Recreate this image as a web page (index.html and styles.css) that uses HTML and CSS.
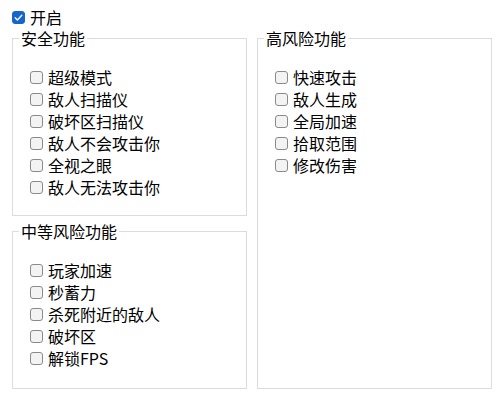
FILE: index.html
```html
<!DOCTYPE html>
<html lang="zh-CN">
<head>
<meta charset="utf-8">
<title>功能设置</title>
<link rel="stylesheet" href="styles.css">
</head>
<body>
<div class="app">
  <label class="opt top-opt">
    <span class="box checked"><svg viewBox="0 0 13 13" width="13" height="13"><path d="M3.2 6.8 L5.4 9 L9.8 4.3" fill="none" stroke="#fff" stroke-width="1.3" stroke-linecap="round" stroke-linejoin="round"/></svg></span>
    <span class="txt">开启</span>
  </label>
  <div class="cols">
    <div class="left-col">
      <fieldset class="group g-safe">
        <legend>安全功能</legend>
        <div class="list">
          <label class="opt"><span class="box"></span><span class="txt">超级模式</span></label>
          <label class="opt"><span class="box"></span><span class="txt">敌人扫描仪</span></label>
          <label class="opt"><span class="box"></span><span class="txt">破坏区扫描仪</span></label>
          <label class="opt"><span class="box"></span><span class="txt">敌人不会攻击你</span></label>
          <label class="opt"><span class="box"></span><span class="txt">全视之眼</span></label>
          <label class="opt"><span class="box"></span><span class="txt">敌人无法攻击你</span></label>
        </div>
      </fieldset>
      <fieldset class="group g-mid">
        <legend>中等风险功能</legend>
        <div class="list">
          <label class="opt"><span class="box"></span><span class="txt">玩家加速</span></label>
          <label class="opt"><span class="box"></span><span class="txt">秒蓄力</span></label>
          <label class="opt"><span class="box"></span><span class="txt">杀死附近的敌人</span></label>
          <label class="opt"><span class="box"></span><span class="txt">破坏区</span></label>
          <label class="opt"><span class="box"></span><span class="txt">解锁FPS</span></label>
        </div>
      </fieldset>
    </div>
    <fieldset class="group g-high">
      <legend>高风险功能</legend>
      <div class="list">
        <label class="opt"><span class="box"></span><span class="txt">快速攻击</span></label>
        <label class="opt"><span class="box"></span><span class="txt">敌人生成</span></label>
        <label class="opt"><span class="box"></span><span class="txt">全局加速</span></label>
        <label class="opt"><span class="box"></span><span class="txt">拾取范围</span></label>
        <label class="opt"><span class="box"></span><span class="txt">修改伤害</span></label>
      </div>
    </fieldset>
  </div>
</div>
</body>
</html>
```

FILE: styles.css
```css
html, body {
  margin: 0;
  padding: 0;
  background: #ffffff;
}

body {
  font-family: "Noto Sans CJK SC", "Noto Sans", sans-serif;
  font-size: 16px;
  color: #000000;
}

.app {
  width: 500px;
  height: 399px;
  box-sizing: border-box;
  padding: 7px 8px 0 12px;
}

.opt {
  display: flex;
  align-items: center;
  height: 22px;
  line-height: 22px;
}

.top-opt {
  height: 20px;
  line-height: 20px;
}

.box {
  width: 13px;
  height: 13px;
  box-sizing: border-box;
  border: 1px solid #8a8a8a;
  border-radius: 3px;
  background: #f3f3f3;
  margin-right: 5px;
  flex: none;
  display: flex;
}

.box.checked {
  background: #1566cc;
  border-color: #1566cc;
}

.box svg {
  margin: -1px;
}

.txt {
  white-space: nowrap;
}

.cols {
  display: grid;
  grid-template-columns: 235px 235px;
  column-gap: 10px;
  align-items: start;
}

.left-col {
  display: flex;
  flex-direction: column;
  gap: 4px;
}

.group {
  margin: 0;
  padding: 17px 0 0 0;
  border: 1px solid #dcdcdc;
  min-width: 0;
  box-sizing: border-box;
}

.group legend {
  margin-left: 6px;
  padding: 0 2px;
  line-height: 22px;
  font-size: 16px;
}

.list {
  padding-left: 17px;
}

.g-safe {
  height: 189px;
}

.g-mid {
  height: 169px;
}

.g-high {
  height: 362px;
}
```
